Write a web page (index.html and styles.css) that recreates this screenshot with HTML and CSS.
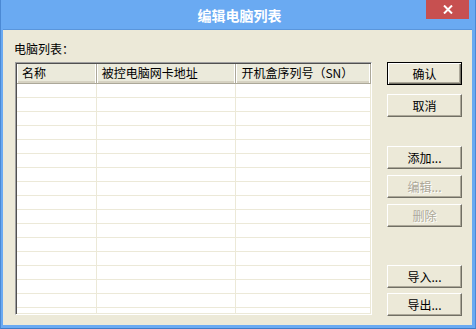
FILE: index.html
```html
<!DOCTYPE html>
<html lang="zh-CN">
<head>
    <meta charset="UTF-8">
    <title>编辑电脑列表</title>
    <link rel="stylesheet" href="styles.css">
</head>
<body>
    <div class="window">
        <div class="title-bar">
            <div class="title">编辑电脑列表</div>
            <button class="close-button" title="关闭">
                <svg width="10" height="9" viewBox="0 0 10 9">
                    <path d="M1 0.5 L9 8.5 M9 0.5 L1 8.5" stroke="#fff" stroke-width="2"/>
                </svg>
            </button>
        </div>

        <div class="client">
            <!-- computer list -->
            <div class="list-column">
                <div class="list-label">电脑列表：</div>
                <div class="list-box">
                    <div class="list-header">
                        <div class="header-cell col-name">名称</div>
                        <div class="header-cell col-mac">被控电脑网卡地址</div>
                        <div class="header-cell col-sn">开机盒序列号（SN）</div>
                    </div>
                    <div class="list-rows" id="listRows"></div>
                </div>
            </div>

            <!-- dialog buttons -->
            <div class="button-column">
                <div class="button-group group-main">
                    <button class="dlg-button default-button">确认</button>
                    <button class="dlg-button">取消</button>
                </div>
                <div class="button-group group-edit">
                    <button class="dlg-button">添加...</button>
                    <button class="dlg-button" disabled>编辑...</button>
                    <button class="dlg-button" disabled>删除</button>
                </div>
                <div class="button-group group-io">
                    <button class="dlg-button">导入...</button>
                    <button class="dlg-button">导出...</button>
                </div>
            </div>
        </div>
    </div>

    <script>
        // fill the list with empty rows so the grid lines show
        const listRows = document.getElementById('listRows');
        for (let i = 0; i < 17; i++) {
            const row = document.createElement('div');
            row.className = 'list-row';
            row.innerHTML = '<div class="row-cell col-name"></div>' +
                '<div class="row-cell col-mac"></div>' +
                '<div class="row-cell col-sn"></div>';
            listRows.appendChild(row);
        }
    </script>
</body>
</html>
```

FILE: styles.css
```css
body {
    margin: 0;
    font-family: "Noto Sans CJK SC", "Noto Sans", sans-serif;
    font-size: 12px;
    color: #000;
}
.window {
    width: 476px;
    height: 329px;
    box-sizing: border-box;
    display: flex;
    flex-direction: column;
    background-color: #6aaaf2;
    border-left: 1px solid #4b89d4;
    border-right: 1px solid #4b89d4;
    border-bottom: 1px solid #3f7cc6;
    padding: 0 3px 3px 2px;
}
.title-bar {
    height: 29px;
    display: flex;
    align-items: flex-start;
    justify-content: center;
    position: relative;
}
.title {
    color: #fff;
    font-weight: bold;
    font-size: 14px;
    line-height: 30px;
    letter-spacing: 0;
    margin-left: 4px;
}
.close-button {
    position: absolute;
    top: 0;
    right: 3px;
    width: 43px;
    height: 19px;
    border: none;
    padding: 0;
    background-color: #c75050;
    display: flex;
    align-items: center;
    justify-content: center;
}
.client {
    flex-grow: 1;
    display: flex;
    background-color: #ece9d8;
    border-top: 1px solid #5a96dc;
    padding-left: 12px;
}
.list-column {
    width: 357px;
    padding-top: 12px;
}
.list-label {
    line-height: 14px;
    height: 14px;
    margin-left: -1px;
    margin-bottom: 6px;
}
.list-box {
    height: 253px;
    box-sizing: border-box;
    background-color: #fff;
    border-top: 1px solid #a0a0a0;
    border-left: 1px solid #a0a0a0;
    border-right: 1px solid #fff;
    border-bottom: 1px solid #fff;
    box-shadow: inset 1px 1px 0 #505050, inset -1px -1px 0 #ece9d8;
    padding: 1px 0 0 1px;
    overflow: hidden;
}
.list-header {
    display: flex;
    height: 19px;
    background-color: #ebeadb;
    border-bottom: 1px solid #aca899;
    box-shadow: inset 0 -2px 0 #d6d2c2;
}
.header-cell {
    box-sizing: border-box;
    line-height: 18px;
    padding-left: 5px;
    border-right: 1px solid #aca899;
    box-shadow: inset -1px 0 0 #fff, inset 1px 0 0 #fff;
    white-space: nowrap;
}
.col-name {
    width: 80px;
}
.col-mac {
    width: 140px;
}
.col-sn {
    width: 135px;
}
.list-row {
    display: flex;
    height: 14px;
}
.row-cell {
    box-sizing: border-box;
    border-right: 1px solid #ece9d8;
    border-bottom: 1px solid #ece9d8;
}
.button-column {
    margin-left: 15px;
    padding-top: 32px;
    display: flex;
    flex-direction: column;
}
.button-group {
    display: flex;
    flex-direction: column;
}
.group-main {
    gap: 9px;
}
.group-edit {
    margin-top: 29px;
    gap: 6px;
}
.group-io {
    margin-top: 38px;
    gap: 5px;
}
.dlg-button {
    width: 75px;
    height: 23px;
    padding: 0;
    font-family: "Noto Sans CJK SC", "Noto Sans", sans-serif;
    font-size: 12px;
    color: #000;
    background-color: #ece9d8;
    border-top: 1px solid #fff;
    border-left: 1px solid #fff;
    border-right: 1px solid #716f64;
    border-bottom: 1px solid #716f64;
    box-shadow: inset -1px -1px 0 #aca899;
}
.default-button {
    border: 1px solid #000;
    box-shadow: inset 1px 1px 0 #fff, inset -1px -1px 0 #716f64, inset -2px -2px 0 #aca899;
}
.dlg-button:disabled {
    color: #aca899;
    text-shadow: 1px 1px 0 #fff;
}
```
